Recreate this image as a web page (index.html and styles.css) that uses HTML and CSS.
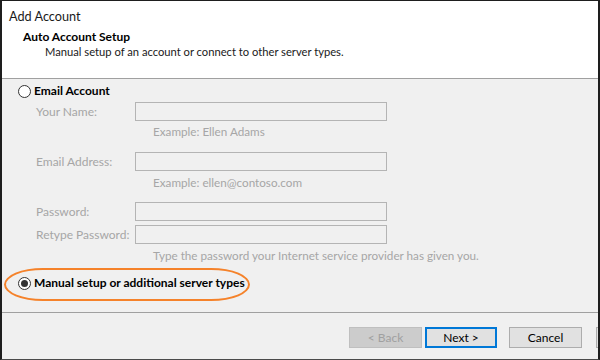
FILE: index.html
```html
<!DOCTYPE html>
<html>
<head>
<meta charset="utf-8">
<link rel="stylesheet" href="styles.css">
</head>
<body>
<div class="window">
  <div class="header">
    <div class="title">Add Account</div>
    <div class="heading">Auto Account Setup</div>
    <div class="subheading">Manual setup of an account or connect to other server types.</div>
  </div>
  <div class="content">
    <div class="option">
      <span class="radio"></span>
      <span class="option-label">Email Account</span>
    </div>
    <div class="field first">
      <span class="label">Your Name:</span>
      <span class="input"></span>
    </div>
    <div class="hint">Example: Ellen Adams</div>
    <div class="field spaced">
      <span class="label">Email Address:</span>
      <span class="input"></span>
    </div>
    <div class="hint">Example: ellen@contoso.com</div>
    <div class="field spaced">
      <span class="label">Password:</span>
      <span class="input"></span>
    </div>
    <div class="field tight">
      <span class="label">Retype Password:</span>
      <span class="input"></span>
    </div>
    <div class="hint">Type the password your Internet service provider has given you.</div>
    <div class="option manual">
      <span class="radio checked"></span>
      <span class="option-label">Manual setup or additional server types</span>
      <span class="highlight"></span>
    </div>
  </div>
  <div class="footer">
    <button class="btn disabled">&lt; Back</button>
    <button class="btn default">Next &gt;</button>
    <button class="btn cancel">Cancel</button>
    <button class="btn extra" aria-label="Help"></button>
  </div>
</div>
</body>
</html>
```
FILE: styles.css
```css
* { box-sizing: border-box; }
html, body { margin: 0; padding: 0; }
body {
  width: 600px;
  height: 360px;
  overflow: hidden;
  font-family: "Segoe UI", Lato, "Noto Sans", sans-serif;
  font-size: 12px;
  color: #000;
}
.window {
  width: 600px;
  height: 360px;
  background: #f0f0f0;
  border-left: 2px solid #1e1e1e;
  border-right: 2px solid #1e1e1e;
  border-top: 1px solid #1e1e1e;
  border-bottom: 1px solid #4a4a4a;
  display: flex;
  flex-direction: column;
  overflow: hidden;
}
.header {
  background: #fff;
  height: 78px;
  flex: none;
  border-bottom: 1px solid #a0a0a0;
  padding-top: 7px;
}
.title {
  font-size: 12.7px;
  line-height: 16px;
  padding-left: 7px;
  color: #1a1a1a;
}
.heading {
  font-weight: bold;
  line-height: 16px;
  margin-top: 5px;
  padding-left: 21px;
}
.subheading {
  font-size: 11.2px;
  line-height: 16px;
  margin-top: -1px;
  padding-left: 43px;
  color: #1a1a1a;
}
.content {
  flex: 1;
  padding-top: 4px;
  display: flex;
  flex-direction: column;
}
.option {
  display: flex;
  align-items: center;
  height: 16px;
  line-height: 16px;
  padding-left: 16px;
  position: relative;
}
.radio {
  width: 13px;
  height: 13px;
  border: 1px solid #333;
  border-radius: 50%;
  background: #fff;
  display: flex;
  align-items: center;
  justify-content: center;
  margin-right: 3px;
  flex: none;
}
.radio.checked::after {
  content: "";
  width: 7px;
  height: 7px;
  border-radius: 50%;
  background: #333;
}
.option-label {
  font-weight: bold;
}
.field {
  display: flex;
  align-items: center;
  height: 19px;
  padding-left: 34px;
}
.field.first { margin-top: 3px; }
.field.spaced { margin-top: 12px; }
.field.tight { margin-top: 4px; }
.label {
  width: 99px;
  color: #a6a6a6;
  flex: none;
}
.input {
  width: 252px;
  height: 19px;
  border: 1px solid #b4b4b4;
  background: #f0f0f0;
  flex: none;
}
.hint {
  padding-left: 151px;
  line-height: 16px;
  height: 16px;
  margin-top: 2px;
  color: #a6a6a6;
  font-size: 11.7px;
}
.field.spaced + .hint, .field.tight + .hint { margin-top: 3px; }
.field.first + .hint + .field.spaced { margin-top: 13px; }
.option.manual {
  margin-top: 12px;
}
.highlight {
  position: absolute;
  left: 2px;
  top: -7px;
  width: 246px;
  height: 33px;
  border: 2.5px solid #f5822a;
  border-radius: 40px / 17px;
}
.footer {
  flex: none;
  height: 47px;
  border-top: 1px solid #a0a0a0;
  display: flex;
  align-items: flex-start;
  padding-top: 14px;
  padding-left: 347px;
  white-space: nowrap;
}
.btn {
  font-family: inherit;
  font-size: 12px;
  height: 21px;
  width: 73px;
  flex: none;
  background: #e1e1e1;
  border: 1px solid #adadad;
  padding: 0;
  color: #000;
}
.btn.disabled {
  background: #cccccc;
  border-color: #bfbfbf;
  color: #a0a0a0;
}
.btn.default {
  margin-left: 3px;
  width: 72px;
  border: 2px solid #0078d7;
}
.btn.cancel {
  margin-left: 12px;
}
.btn.extra {
  margin-left: 14px;
}
```
